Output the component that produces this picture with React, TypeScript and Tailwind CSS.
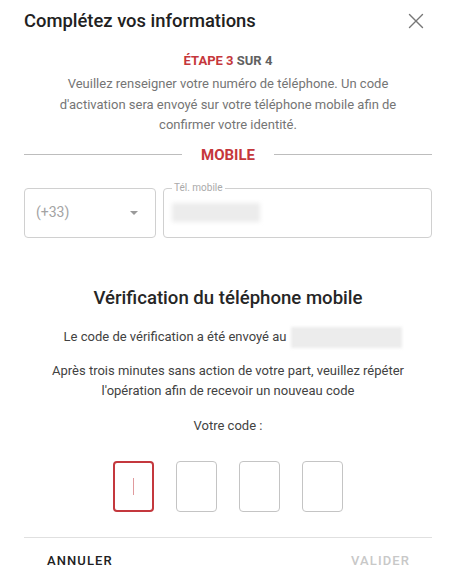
import { X } from "lucide-react";

const red = "text-[#c5373b]";

const CodeBox = (props: { active?: boolean }) => {
  return (
    <div
      className={
        props.active
          ? "flex h-[51px] w-[41px] items-center justify-center rounded-[4px] border-2 border-[#c4383d]"
          : "flex h-[51px] w-[41px] items-center justify-center rounded-[4px] border border-[#c4c4c4]"
      }
    >
      {props.active && <div className="h-[17px] w-px bg-[#e09a9d]"></div>}
    </div>
  );
};

const App = () => {
  return (
    <div
      className="flex h-[588px] w-[449px] flex-col bg-white pl-6 pr-[17px] text-[#212121]"
      style={{ fontFamily: "Roboto, 'Liberation Sans', sans-serif" }}
    >
      {/* header */}
      <div className="flex h-[42px] items-center justify-between pr-[3px]">
        <h1 className="text-[18.4px] font-medium leading-none">
          Complétez vos informations
        </h1>
        <X size={26} strokeWidth={1.3} className="text-[#777]" />
      </div>

      <div className="mt-[9px] text-center text-[13px] font-bold leading-[20px]">
        <span className={red}>ÉTAPE 3</span>{" "}
        <span className="text-[#616161]">SUR 4</span>
      </div>
      <p className="mx-auto mt-[3px] max-w-[350px] text-center text-[13px] leading-[20.5px] text-[#757575]">
        Veuillez renseigner votre numéro de téléphone. Un code d'activation
        sera envoyé sur votre téléphone mobile afin de confirmer votre
        identité.
      </p>

      {/* section divider */}
      <div className="mt-[9px] flex items-center gap-[19px]">
        <div className="h-px flex-1 bg-[#bdbdbd]"></div>
        <span className={`text-[15px] font-bold leading-[20px] ${red}`}>
          MOBILE
        </span>
        <div className="h-px flex-1 bg-[#bdbdbd]"></div>
      </div>

      {/* phone inputs */}
      <div className="mt-[23px] flex gap-[7px]">
        <div className="flex h-[50px] w-[132px] items-center justify-between rounded-[4px] border border-[#d0d0d0] pl-[11px] pr-[17px]">
          <span className="text-[14px] text-[#a3a3a3]">(+33)</span>
          <div className="h-0 w-0 border-x-[4px] border-t-[4px] border-x-transparent border-t-[#9a9a9a]"></div>
        </div>
        <div className="relative flex h-[50px] flex-1 items-center rounded-[4px] border border-[#d0d0d0] pl-[8px]">
          <span className="absolute -top-[7px] left-[8px] bg-white px-[2px] text-[10px] leading-[12px] text-[#aaa]">
            Tél. mobile
          </span>
          <div className="h-[19px] w-[88px] bg-[#ececec] blur-[2px]"></div>
        </div>
      </div>

      {/* verification */}
      <h2 className="mt-[48px] text-center text-[18.6px] font-medium leading-[24px] text-[#262626]">
        Vérification du téléphone mobile
      </h2>
      <div className="mt-[17px] flex items-center justify-center gap-[5px] pl-[10px] text-[13px] text-[#424242]">
        <span>Le code de vérification a été envoyé au</span>
        <div className="h-[21px] w-[111px] bg-[#ececec] blur-[1.5px]"></div>
      </div>
      <p className="mx-auto mt-[13px] max-w-[360px] text-center text-[13px] leading-[20px] text-[#424242]">
        Après trois minutes sans action de votre part, veuillez répéter
        l'opération afin de recevoir un nouveau code
      </p>
      <p className="mt-[15px] text-center text-[13px] leading-[20px] text-[#424242]">
        Votre code :
      </p>

      <div className="mt-[25px] flex justify-center gap-[22px]">
        <CodeBox active />
        <CodeBox />
        <CodeBox />
        <CodeBox />
      </div>

      <div className="mt-[25px] h-px bg-[#e0e0e0]"></div>

      <div className="mt-[13px] flex items-center justify-between pl-[23px] pr-[22px] text-[13px] font-medium leading-[20px] tracking-[1.1px]">
        <button className="text-[#212121]">ANNULER</button>
        <button className="text-[#c8c8c8]">VALIDER</button>
      </div>
    </div>
  );
};

export default App;
